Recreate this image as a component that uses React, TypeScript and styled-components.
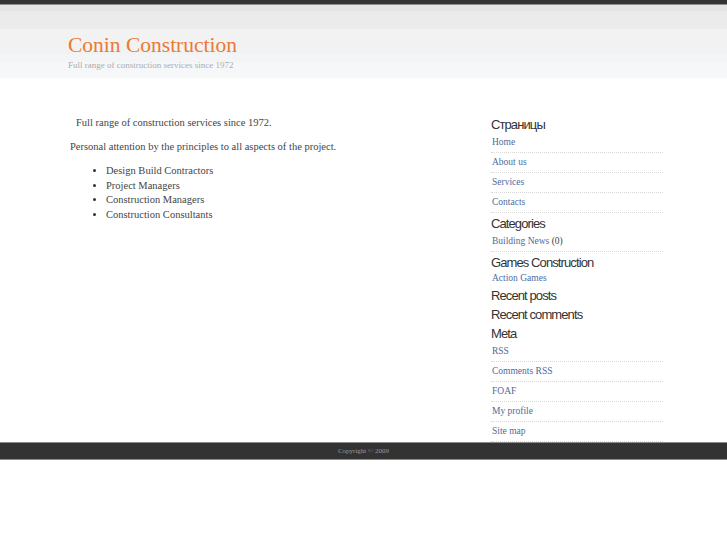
import styled, { createGlobalStyle } from 'styled-components'

const GlobalStyle = createGlobalStyle`
  body {
    margin: 0;
    background: #fff;
    font-family: "Liberation Serif", "Times New Roman", serif;
    color: #444;
  }
`

const pages = ['Home', 'About us', 'Services', 'Contacts']
const meta = ['RSS', 'Comments RSS', 'FOAF', 'My profile', 'Site map']
const services = [
  'Design Build Contractors',
  'Project Managers',
  'Construction Managers',
  'Construction Consultants',
]

export default function App() {
  return (
    <>
      <GlobalStyle />
      <TopBar />
      <Header>
        <Wrap>
          <Title>Conin Construction</Title>
          <Tagline>Full range of construction services since 1972</Tagline>
        </Wrap>
      </Header>
      <Main>
        <Columns>
          <Content>
            <Para $indent>Full range of construction services since 1972.</Para>
            <Para>Personal attention by the principles to all aspects of the project.</Para>
            <Bullets>
              {services.map(s => <li key={s}>{s}</li>)}
            </Bullets>
          </Content>
          <Sidebar>
            <WidgetTitle>Страницы</WidgetTitle>
            <LinkList>
              {pages.map(p => <LinkItem key={p}><a href="#">{p}</a></LinkItem>)}
            </LinkList>
            <WidgetTitle>Categories</WidgetTitle>
            <LinkList>
              <LinkItem><a href="#">Building News</a> (0)</LinkItem>
            </LinkList>
            <WidgetTitle>Games Construction</WidgetTitle>
            <LinkList>
              <LinkItem $plain><a href="#">Action Games</a></LinkItem>
            </LinkList>
            <WidgetTitle>Recent posts</WidgetTitle>
            <WidgetTitle>Recent comments</WidgetTitle>
            <WidgetTitle>Meta</WidgetTitle>
            <LinkList>
              {meta.map(m => <LinkItem key={m}><a href="#">{m}</a></LinkItem>)}
            </LinkList>
          </Sidebar>
        </Columns>
      </Main>
      <Footer>Copyright © 2009</Footer>
    </>
  )
}

const TopBar = styled.div`
  height: 4px;
  background: #333;
  border-bottom: 1px solid #8c8c8c;
`

const Header = styled.header`
  height: 73px;
  box-sizing: border-box;
  padding-top: 27px;
  background: linear-gradient(
    to bottom,
    #e4e4e4 0 6px,
    #ebebeb 6px 24px,
    #f2f2f2 24px 49px,
    #f3f4f6 49px 57px,
    #f6f7f9 57px 73px
  );
`

const Wrap = styled.div`
  width: 599px;
  box-sizing: border-box;
  padding-left: 4px;
  margin: 0 auto;
`

const Title = styled.h1`
  margin: 0;
  font-size: 21.5px;
  line-height: 26px;
  font-weight: normal;
  color: #ea7a35;
`

const Tagline = styled.div`
  padding-top: 1px;
  font-size: 9px;
  line-height: 12px;
  color: #acacac;
`

const Main = styled.main`
  padding: 36px 0 0;
`

const Columns = styled(Wrap)`
  display: flex;
  justify-content: space-between;
`

const Content = styled.div`
  flex: 1;
  padding: 2px 0 0 2px;
  font-size: 10.5px;
  line-height: 14px;
  color: #444;
`

const Para = styled.p<{ $indent?: boolean }>`
  margin: 0 0 10px;
  padding-left: ${p => (p.$indent ? '6px' : '0')};
`

const Bullets = styled.ul`
  margin: 0;
  padding-left: 36px;
  line-height: 14.5px;
  li::marker {
    color: #333;
  }
`

const Sidebar = styled.aside`
  width: 172px;
  flex-shrink: 0;
`

const WidgetTitle = styled.h2`
  margin: 0;
  padding-top: 2px;
  font-family: "Liberation Sans", Arial, sans-serif;
  font-weight: normal;
  font-size: 13px;
  letter-spacing: -0.9px;
  line-height: 17px;
  color: #333;
`

const LinkList = styled.ul`
  list-style: none;
  margin: 0;
  padding: 0;
`

const LinkItem = styled.li<{ $plain?: boolean }>`
  padding: 0 0 ${p => (p.$plain ? '0' : '1px')} 1px;
  font-size: 9.5px;
  line-height: ${p => (p.$plain ? '14px' : '18px')};
  color: #444;
  border-bottom: ${p => (p.$plain ? 'none' : '1px dotted #d8d8d8')};
  a {
    color: #4d6b9c;
    text-decoration: none;
  }
`

const Footer = styled.footer`
  height: 16px;
  line-height: 16px;
  background: #333;
  border-top: 1px solid #8c8c8c;
  border-bottom: 1px solid #8c8c8c;
  text-align: center;
  font-size: 7px;
  color: #999;
`
